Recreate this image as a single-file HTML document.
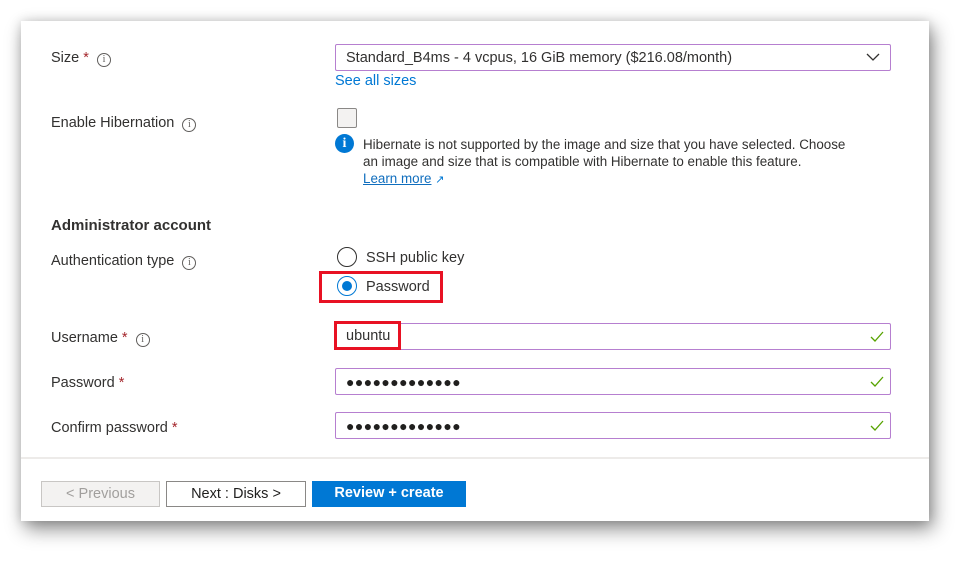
<!DOCTYPE html>
<html><head><meta charset="utf-8"><style>
body{margin:0;width:971px;height:564px;background:#fff;position:relative;overflow:hidden;font-family:"Liberation Sans",sans-serif;color:#323130;}
.panel{position:absolute;left:21px;top:21px;width:908px;height:500px;background:#fff;box-shadow:4px 8px 18px rgba(0,0,0,.45),0 0 10px rgba(0,0,0,.15);}
.a{position:absolute;white-space:nowrap;font-size:14.5px;}
.req{color:#a4262c}
.info{display:inline-block;width:12px;height:12px;border:1px solid #605e5c;border-radius:50%;font-size:10px;line-height:12px;text-align:center;color:#605e5c;vertical-align:0px;font-family:"Liberation Serif",serif}
.inp{position:absolute;left:335px;width:556px;height:26px;border:1px solid #b67fd0;border-radius:2px;box-sizing:border-box;}
.chk{position:absolute;right:6px;top:7px}
.dots{position:absolute;left:10px;top:5px;font-size:14px;letter-spacing:0.4px;color:#201f1e}
.btn{position:absolute;top:481px;height:26px;box-sizing:border-box;font-size:14.5px;text-align:center;line-height:24px}
</style></head><body>
<div class="panel"></div>
<div class="a" style="left:51px;top:50px">Size <span class="req">*</span> &nbsp;<span class="info">i</span></div>
<div class="inp" style="top:44px;height:27px;border-color:#b67fd0"><span class="a" style="left:10px;top:5px">Standard_B4ms - 4 vcpus, 16 GiB memory ($216.08/month)</span>
<svg class="a" style="right:10px;top:8px" width="14" height="9"><path d="M1 1L7 7L13 1" fill="none" stroke="#323130" stroke-width="1.3"/></svg></div>
<div class="a" style="left:335px;top:73px;color:#0078d4">See all sizes</div>
<div class="a" style="left:51px;top:115px">Enable Hibernation &nbsp;<span class="info">i</span></div>
<div style="position:absolute;left:337px;top:108px;width:20px;height:20px;border:1px solid #8a8886;border-radius:2px;background:#f3f2f1;box-sizing:border-box"></div>
<div style="position:absolute;left:335px;top:134px;width:19px;height:19px;border-radius:50%;background:#0078d4;color:#fff;font-weight:bold;font-size:14px;text-align:center;line-height:19px;font-family:'Liberation Serif',serif">i</div>
<div class="a" style="left:363px;top:136px;font-size:13.4px;line-height:17px">Hibernate is not supported by the image and size that you have selected. Choose<br>an image and size that is compatible with Hibernate to enable this feature.<br><span style="color:#106ebe;text-decoration:underline">Learn more</span> <span style="color:#0078d4;font-size:11px">↗</span></div>
<div class="a" style="left:51px;top:217px;font-size:15px;font-weight:bold">Administrator account</div>
<div class="a" style="left:51px;top:253px">Authentication type &nbsp;<span class="info">i</span></div>
<div style="position:absolute;left:337px;top:247px;width:20px;height:20px;border:1px solid #323130;border-radius:50%;box-sizing:border-box"></div>
<div class="a" style="left:366px;top:250px">SSH public key</div>
<div style="position:absolute;left:319px;top:271px;width:124px;height:32px;border:3px solid #e81123;box-sizing:border-box"></div>
<div style="position:absolute;left:337px;top:276px;width:20px;height:20px;border:1px solid #0078d4;border-radius:50%;box-sizing:border-box"><div style="position:absolute;left:4px;top:4px;width:10px;height:10px;border-radius:50%;background:#0078d4"></div></div>
<div class="a" style="left:366px;top:279px">Password</div>
<div class="a" style="left:51px;top:330px">Username <span class="req">*</span> &nbsp;<span class="info">i</span></div>
<div class="inp" style="top:323px;height:27px"><svg class="chk" width="14" height="12"><path d="M1 6L5 10L13 1" fill="none" stroke="#57a300" stroke-width="1.3"/></svg></div>
<div style="position:absolute;left:334px;top:321px;width:67px;height:29px;border:3px solid #e81123;box-sizing:border-box"></div>
<div class="a" style="left:346px;top:328px">ubuntu</div>
<div class="a" style="left:51px;top:375px">Password <span class="req">*</span></div>
<div class="inp" style="top:368px;height:27px"><span class="dots">●●●●●●●●●●●●●</span><svg class="chk" width="14" height="12"><path d="M1 6L5 10L13 1" fill="none" stroke="#57a300" stroke-width="1.3"/></svg></div>
<div class="a" style="left:51px;top:420px">Confirm password <span class="req">*</span></div>
<div class="inp" style="top:412px;height:27px"><span class="dots">●●●●●●●●●●●●●</span><svg class="chk" width="14" height="12"><path d="M1 6L5 10L13 1" fill="none" stroke="#57a300" stroke-width="1.3"/></svg></div>
<div style="position:absolute;left:21px;top:457px;width:908px;height:2px;background:#edebe9"></div>
<div class="btn" style="left:41px;width:119px;border:1px solid #c8c6c4;background:#f3f2f1;color:#a19f9d">&lt; Previous</div>
<div class="btn" style="left:166px;width:140px;border:1px solid #8a8886;background:#fff;color:#201f1e">Next : Disks &gt;</div>
<div class="btn" style="left:312px;width:154px;background:#0078d4;color:#fff;font-weight:bold">Review + create</div>
</body></html>
